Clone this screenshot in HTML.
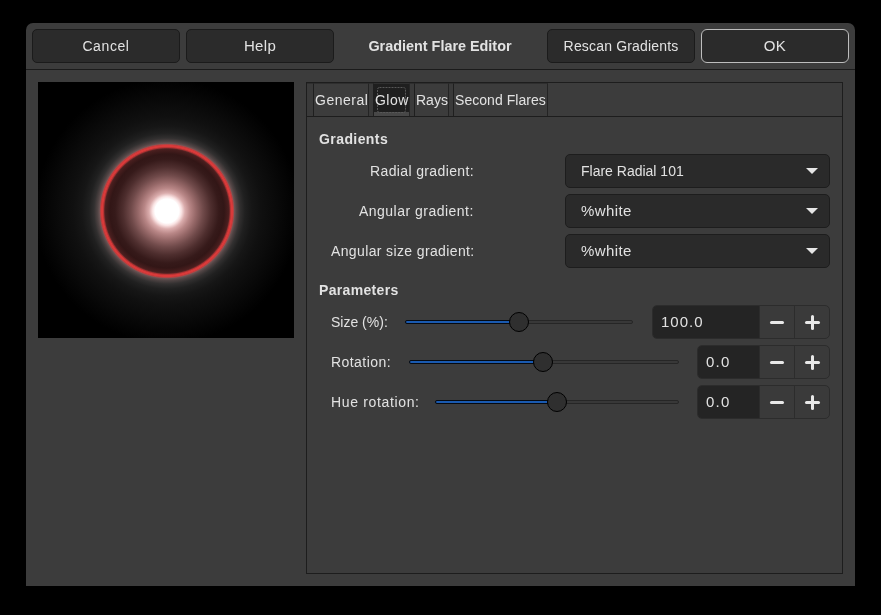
<!DOCTYPE html>
<html><head><meta charset="utf-8">
<style>
*{box-sizing:border-box;margin:0;padding:0}
html,body{width:881px;height:615px;background:#000;overflow:hidden}
body{font-family:"Liberation Sans",sans-serif;font-size:14px;color:#e2e2e2;position:relative}
.abs{position:absolute}
.t,.btn,#title,.combo span,.spin .ent span{will-change:transform}
#win{left:26px;top:23px;width:829px;height:563px;background:#3c3c3c;border-radius:7px 7px 0 0;overflow:hidden}
#hdrline{left:26px;top:69px;width:829px;height:1px;background:#1b1b1b}
.btn{position:absolute;top:29px;height:34px;width:148px;background:#2b2b2b;border:1px solid #1b1b1b;border-radius:5px;text-align:center;line-height:32px;white-space:nowrap}
.btn.ok{border-color:#bdbdbd;border-radius:6px}
#title{left:340px;top:29px;width:200px;text-align:center;line-height:34px;font-weight:bold;font-size:14.4px;white-space:nowrap}
#preview{left:38px;top:82px;width:256px;height:256px;background:#000;overflow:hidden}
#nb{left:306px;top:82px;width:537px;height:492px;border:1px solid #1d1d1d;background:#3c3c3c}
#tabbar{left:307px;top:83px;width:535px;height:33px}
#tabline{left:307px;top:116px;width:535px;height:1px;background:#1d1d1d}
.tsep{position:absolute;top:83px;height:33px;background:#3a3a3a;border-right:1px solid #1f1f1f;border-top:1px solid #2e2e2e}
.tab{position:absolute;top:83px;height:33px;line-height:33px;white-space:nowrap;border-right:1px solid #242424;border-top:1px solid #2e2e2e}
.t{position:absolute;white-space:nowrap;line-height:16px}
.hd{font-weight:bold}
.combo{position:absolute;left:565px;width:265px;height:34px;background:#2a2a2a;border:1px solid #1d1d1d;border-radius:5px}
.combo span{position:absolute;left:15px;top:0;line-height:32px;white-space:nowrap}
.combo i{position:absolute;left:240px;top:13px;width:0;height:0;border-left:6px solid transparent;border-right:6px solid transparent;border-top:6px solid #e6e6e6}
.spin{position:absolute;height:34px;background:#3a3a3a;border:1px solid #2c2c2c;border-radius:5px;overflow:hidden}
.spin .ent{position:absolute;left:0;top:0;bottom:0;background:#242424;border-right:1px solid #2c2c2c}
.spin .ent span{position:absolute;left:8px;top:0;line-height:32px;font-size:15px}
.spin .sb{position:absolute;top:0;bottom:0;width:35px}
.track{position:absolute;height:4px;background:#383838;border:1px solid #262626;border-radius:2px}
.fill{position:absolute;height:4px;background:#1a5ab0;border:1px solid #050a12;border-radius:2px}
.knob{position:absolute;width:20px;height:20px;border-radius:50%;background:#2f2f2f;border:1.3px solid #000}
#flare{position:absolute;left:0;top:0;width:256px;height:256px;background:
radial-gradient(circle at 129px 129px, rgba(215,55,55,0) 62.3px, rgba(215,55,55,0.75) 63.6px, rgba(218,58,58,1) 64.3px, rgba(218,58,58,1) 65.6px, rgba(215,55,55,0.75) 66.3px, rgba(215,55,55,0) 67.6px),
radial-gradient(circle at 129px 129px, #fff 0px, #fff 12px, rgba(250,228,228,1) 14.5px, rgba(218,172,172,1) 18px, rgba(184,134,134,1) 23px, rgba(150,104,104,1) 29px, rgba(112,74,74,1) 36px, rgba(78,46,46,1) 44px, rgba(54,26,26,1) 52px, rgba(50,22,22,1) 57px, rgba(72,30,30,1) 61.5px, rgba(105,42,42,1) 63.5px, rgba(0,0,0,0) 64.5px),
radial-gradient(circle at 129px 129px, rgba(0,0,0,0) 64.5px, rgba(118,92,92,1) 66.5px, rgba(80,68,68,1) 69.5px, rgba(50,48,48,1) 73px, rgba(32,32,32,1) 78px, rgba(22,22,22,1) 85px, rgba(16,16,16,1) 94px, rgba(10,10,10,1) 108px, rgba(4,4,4,1) 122px, rgba(0,0,0,1) 132px),
#000}
.mi{position:absolute;width:14px;height:3px;background:#e8e8e8;border-radius:1.5px}
.pl{position:absolute;width:15px;height:3px;background:#e8e8e8;border-radius:1.5px}
.pl:after{content:"";position:absolute;left:6px;top:-6px;width:3px;height:15px;background:#e8e8e8;border-radius:1.5px}
.sbsep{position:absolute;top:0;bottom:0;width:1px;background:#2c2c2c}
</style></head><body>
<div id="win" class="abs"></div>
<div id="hdrline" class="abs"></div>
<div class="btn" style="left:32px;letter-spacing:0.6px">Cancel</div>
<div class="btn" style="left:186px;font-size:15px;letter-spacing:0.3px">Help</div>
<div id="title" class="abs">Gradient Flare Editor</div>
<div class="btn" style="left:547px;letter-spacing:0.17px">Rescan Gradients</div>
<div class="btn ok" style="left:701px;font-size:15px;letter-spacing:0.5px">OK</div>

<div id="preview" class="abs"><div id="flare"></div></div>

<div id="nb" class="abs"></div>
<div id="tabline" class="abs"></div>
<div class="tsep" style="left:307px;width:7px"></div>
<div class="tab" style="left:314px;width:55px"></div>
<div class="tsep" style="left:369px;width:5px"></div>
<div class="tab" style="left:374px;width:36px;background:#1f1f1f;border-right-color:#262626"></div>
<div class="abs" style="left:374px;top:112px;width:35px;height:4px;background:#474747"></div>
<svg class="abs" style="left:376px;top:86px" width="31" height="28"><rect x="1.5" y="1.5" width="28" height="25" rx="2" fill="none" stroke="#585858" stroke-width="1" stroke-dasharray="2 1"/></svg>
<div class="tsep" style="left:410px;width:5px"></div>
<div class="tab" style="left:415px;width:34px"></div>
<div class="tsep" style="left:449px;width:5px"></div>
<div class="tab" style="left:454px;width:94px"></div>
<div class="t" style="left:315px;top:92px;letter-spacing:0.5px">General</div>
<div class="t" style="left:375px;top:92px;letter-spacing:0.45px">Glow</div>
<div class="t" style="left:416px;top:92px">Rays</div>
<div class="t" style="left:455px;top:92px;letter-spacing:0.05px">Second Flares</div>

<div class="t hd" style="left:319px;top:131px;letter-spacing:0.42px">Gradients</div>
<div class="t" style="left:370px;top:163px;letter-spacing:0.37px">Radial gradient:</div>
<div class="t" style="left:359px;top:203px;letter-spacing:0.48px">Angular gradient:</div>
<div class="t" style="left:331px;top:243px;letter-spacing:0.37px">Angular size gradient:</div>
<div class="combo" style="top:154px"><span>Flare Radial 101</span><i></i></div>
<div class="combo" style="top:194px"><span style="font-size:15px;letter-spacing:0.4px">%white</span><i></i></div>
<div class="combo" style="top:234px"><span style="font-size:15px;letter-spacing:0.4px">%white</span><i></i></div>

<div class="t hd" style="left:319px;top:282px;letter-spacing:0.33px">Parameters</div>
<div class="t" style="left:331px;top:314px">Size (%):</div>
<div class="t" style="left:331px;top:354px;letter-spacing:0.44px">Rotation:</div>
<div class="t" style="left:331px;top:394px;letter-spacing:0.65px">Hue rotation:</div>
<div class="spin" style="left:652px;top:305px;width:178px"><div class="ent" style="width:107px"><span style="letter-spacing:1.0px">100.0</span></div><div class="sbsep" style="left:141px"></div><div class="mi" style="left:117px;top:15px"></div><div class="pl" style="left:152px;top:15px"></div></div>
<div class="spin" style="left:697px;top:345px;width:133px"><div class="ent" style="width:62px"><span style="letter-spacing:1.2px">0.0</span></div><div class="sbsep" style="left:96px"></div><div class="mi" style="left:72px;top:15px"></div><div class="pl" style="left:107px;top:15px"></div></div>
<div class="spin" style="left:697px;top:385px;width:133px"><div class="ent" style="width:62px"><span style="letter-spacing:1.2px">0.0</span></div><div class="sbsep" style="left:96px"></div><div class="mi" style="left:72px;top:15px"></div><div class="pl" style="left:107px;top:15px"></div></div>
<div class="track" style="left:405px;top:320px;width:228px"></div><div class="fill" style="left:405px;top:320px;width:114px"></div><div class="knob" style="left:509px;top:312px"></div>
<div class="track" style="left:409px;top:360px;width:270px"></div><div class="fill" style="left:409px;top:360px;width:134px"></div><div class="knob" style="left:533px;top:352px"></div>
<div class="track" style="left:435px;top:400px;width:244px"></div><div class="fill" style="left:435px;top:400px;width:122px"></div><div class="knob" style="left:547px;top:392px"></div>
</body></html>
